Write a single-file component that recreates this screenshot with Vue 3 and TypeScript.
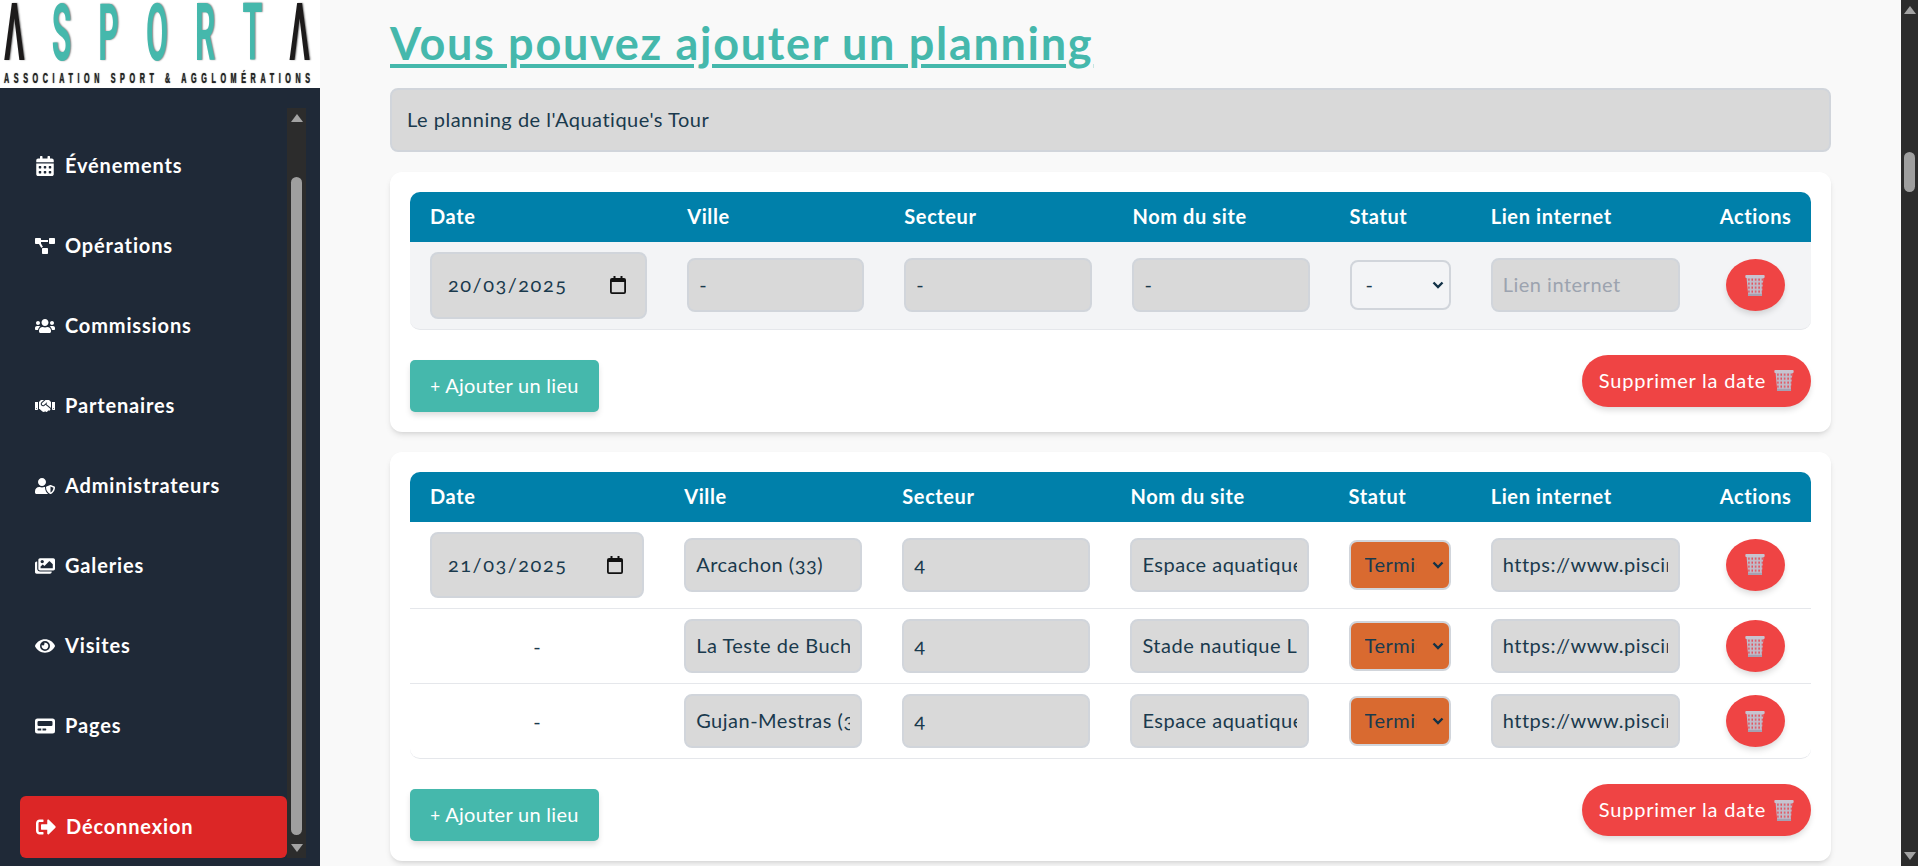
<template>
  <div class="page">
    <aside class="sidebar">
      <div class="logo">
        <div class="logo-word">
          <span v-for="(l, i) in logoLetters" :key="i" class="logo-letter" :class="{ dark: l === 'Λ' }">{{ l }}</span>
        </div>
        <div class="logo-sub">ASSOCIATION SPORT &amp; AGGLOMÉRATIONS</div>
      </div>
      <div class="side-body">
        <nav class="side-nav">
          <a v-for="item in navItems" :key="item.label" class="nav-item">
            <svg class="nav-icon" :viewBox="item.box" preserveAspectRatio="xMidYMid meet"><path fill="currentColor" :d="item.d" /></svg>
            <span>{{ item.label }}</span>
          </a>
          <a class="logout">
            <svg class="nav-icon" viewBox="0 0 512 512"><path fill="currentColor" :d="logoutIcon" /></svg>
            <span>Déconnexion</span>
          </a>
        </nav>
        <div class="side-scroll">
          <span class="arrow up"></span>
          <span class="side-thumb"></span>
          <span class="arrow down"></span>
        </div>
      </div>
    </aside>

    <main class="content">
      <h1 class="title">Vous pouvez ajouter un planning</h1>
      <input class="field title-input" type="text" value="Le planning de l'Aquatique's Tour" />

      <section v-for="(day, d) in days" :key="d" class="card">
        <table class="plan-table">
          <colgroup>
            <col v-for="(w, c) in day.cols" :key="c" :style="{ width: w + 'px' }" />
          </colgroup>
          <thead>
            <tr>
              <th v-for="h in headers" :key="h">{{ h }}</th>
            </tr>
          </thead>
          <tbody>
            <tr v-for="(row, r) in day.rows" :key="r" :class="{ grey: day.grey }">
              <td class="date-cell">
                <div v-if="r === 0" class="field date-field">
                  <span class="date-text">{{ day.date }}</span>
                  <svg class="cal" viewBox="0 0 16 18">
                    <path fill="#111" d="M3.500 0h2v2h5V0h2v2H14a2 2 0 0 1 2 2v12a2 2 0 0 1-2 2H2a2 2 0 0 1-2-2V4a2 2 0 0 1 2-2h1.500zM1.800 6v10c0 .2.100.3.300.3h11.800c.2 0 .3-.1.300-.3V6z" />
                  </svg>
                </div>
                <span v-else>-</span>
              </td>
              <td><input class="field" type="text" :value="row.ville" /></td>
              <td><input class="field" type="text" :value="row.secteur" /></td>
              <td><input class="field" type="text" :value="row.site" /></td>
              <td>
                <select class="status" :class="{ done: row.statut !== '-' }">
                  <option>{{ row.statut }}</option>
                </select>
              </td>
              <td><input class="field" type="text" :value="row.lien" placeholder="Lien internet" /></td>
              <td class="action-cell">
                <button class="round-btn" type="button">
                  <svg class="trash" viewBox="1.500 1 17 18.500"><use href="#trash-icon" /></svg>
                </button>
              </td>
            </tr>
          </tbody>
        </table>
        <div class="card-foot">
          <button class="add-btn" type="button"><small>+</small> Ajouter un lieu</button>
          <button class="del-btn" type="button">
            <span>Supprimer la date</span>
            <svg class="trash" viewBox="1.500 1 17 18.500"><use href="#trash-icon" /></svg>
          </button>
        </div>
      </section>
    </main>

    <div class="page-scroll">
      <span class="arrow up"></span>
      <span class="page-thumb"></span>
      <span class="arrow down"></span>
    </div>

    <svg width="0" height="0" class="defs">
      <defs>
        <pattern id="mesh" width="3" height="3.500" patternUnits="userSpaceOnUse">
          <rect width="3" height="3.500" fill="#c0bcca" />
          <rect x="1" y=".6" width="1.200" height="1.900" fill="#e8444f" />
        </pattern>
        <g id="trash-icon">
          <path d="M2.500 3h15l-1.500 15.500a1.200 1.200 0 0 1-1.200 1H5.200a1.200 1.200 0 0 1-1.200-1z" fill="url(#mesh)" />
          <rect x="1.500" y="1" width="17" height="2.600" rx=".8" fill="#c8c4d0" />
          <rect x="3.800" y="17.600" width="12.400" height="1.900" fill="#a5a1b2" />
        </g>
      </defs>
    </svg>
  </div>
</template>

<script setup lang="ts">
interface PlanRow {
  ville: string;
  secteur: string;
  site: string;
  statut: string;
  lien: string;
}

interface PlanDay {
  date: string;
  grey: boolean;
  cols: number[];
  rows: PlanRow[];
}

const logoLetters = ["Λ", "S", "P", "O", "R", "T", "Λ"];

const navItems = [
  {
    label: "Événements",
    box: "0 0 448 512",
    d: "M0 464c0 26.500 21.500 48 48 48h352c26.500 0 48-21.500 48-48V192H0v272zm320-196c0-6.600 5.400-12 12-12h40c6.600 0 12 5.400 12 12v40c0 6.600-5.400 12-12 12h-40c-6.600 0-12-5.400-12-12v-40zm0 128c0-6.600 5.400-12 12-12h40c6.600 0 12 5.400 12 12v40c0 6.600-5.400 12-12 12h-40c-6.600 0-12-5.400-12-12v-40zM192 268c0-6.600 5.400-12 12-12h40c6.600 0 12 5.400 12 12v40c0 6.600-5.400 12-12 12h-40c-6.600 0-12-5.400-12-12v-40zm0 128c0-6.600 5.400-12 12-12h40c6.600 0 12 5.400 12 12v40c0 6.600-5.400 12-12 12h-40c-6.600 0-12-5.400-12-12v-40zM64 268c0-6.600 5.400-12 12-12h40c6.600 0 12 5.400 12 12v40c0 6.600-5.400 12-12 12H76c-6.600 0-12-5.400-12-12v-40zm0 128c0-6.600 5.400-12 12-12h40c6.600 0 12 5.400 12 12v40c0 6.600-5.400 12-12 12H76c-6.600 0-12-5.400-12-12v-40zM400 64h-48V16c0-8.800-7.200-16-16-16h-32c-8.800 0-16 7.200-16 16v48H160V16c0-8.800-7.200-16-16-16h-32c-8.800 0-16 7.200-16 16v48H48C21.500 64 0 85.500 0 112v48h448v-48c0-26.500-21.500-48-48-48z",
  },
  {
    label: "Opérations",
    box: "0 0 640 512",
    d: "M384 320H256c-17.670 0-32 14.330-32 32v128c0 17.670 14.330 32 32 32h128c17.670 0 32-14.330 32-32V352c0-17.670-14.330-32-32-32zM192 32c0-17.670-14.330-32-32-32H32C14.330 0 0 14.330 0 32v128c0 17.670 14.330 32 32 32h95.720l73.160 128.040C211.980 300.980 232.400 288 256 288h.28L192 175.510V128h224V64H192V32zM608 0H480c-17.670 0-32 14.330-32 32v128c0 17.670 14.330 32 32 32h128c17.670 0 32-14.330 32-32V32c0-17.670-14.330-32-32-32z",
  },
  {
    label: "Commissions",
    box: "0 0 640 512",
    d: "M96 224c35.300 0 64-28.700 64-64s-28.700-64-64-64-64 28.700-64 64 28.700 64 64 64zm448 0c35.300 0 64-28.700 64-64s-28.700-64-64-64-64 28.700-64 64 28.700 64 64 64zm32 32h-64c-17.600 0-33.500 7.100-45.100 18.600 40.300 22.100 68.900 62 75.100 109.400h66c17.700 0 32-14.300 32-32v-32c0-35.300-28.700-64-64-64zm-256 0c61.900 0 112-50.100 112-112S381.900 32 320 32 208 82.100 208 144s50.100 112 112 112zm76.800 32h-8.300c-20.800 10-43.900 16-68.500 16s-47.600-6-68.500-16h-8.300C179.600 288 128 339.600 128 403.200V432c0 26.500 21.500 48 48 48h288c26.500 0 48-21.500 48-48v-28.800c0-63.600-51.600-115.200-115.200-115.200zm-223.700-13.400C161.500 263.100 145.600 256 128 256H64c-35.300 0-64 28.700-64 64v32c0 17.700 14.300 32 32 32h65.900c6.300-47.400 34.900-87.300 75.200-109.400z",
  },
  {
    label: "Partenaires",
    box: "0 0 640 512",
    d: "M434.700 64h-85.900c-8 0-15.700 3-21.600 8.400l-98.300 90c-.1.100-.2.300-.3.400-16.600 15.600-16.300 40.500-2.100 56 12.700 13.900 39.400 17.600 56.100 2.700.1-.1.300-.1.400-.2l79.900-73.200c6.500-5.900 16.700-5.500 22.600 1 6 6.500 5.500 16.600-1 22.600l-26.100 23.900L504 313.800c2.900 2.400 5.500 5 7.900 7.700V128l-54.600-54.600c-5.900-6-14.100-9.400-22.600-9.400zM544 128.200v223.900c0 17.700 14.300 32 32 32h64V128.200h-96zm48 223.900c-8.800 0-16-7.200-16-16s7.200-16 16-16 16 7.200 16 16-7.200 16-16 16zM0 384h64c17.700 0 32-14.300 32-32V128.200H0V384zm48-63.900c8.800 0 16 7.200 16 16s-7.200 16-16 16-16-7.200-16-16c0-8.900 7.200-16 16-16zm435.900 18.600L334.600 217.500l-30 27.500c-29.700 27.100-75.200 24.500-101.700-4.400-26.900-29.400-24.800-74.900 4.400-101.700L289.100 64h-83.800c-8.500 0-16.600 3.400-22.600 9.400L128 128v223.900h18.300l90.500 81.900c27.400 22.300 67.700 18.100 90-9.300l.2-.2 17.900 15.500c15.900 13 39.400 10.500 52.300-5.400l31.400-38.600 5.400 4.400c13.700 11.100 33.900 9.100 45-4.700l9.500-11.700c11.200-13.800 9.100-33.900-4.600-45.100z",
  },
  {
    label: "Administrateurs",
    box: "0 0 640 512",
    d: "M622.300 271.100l-115.200-45c-4.100-1.600-12.600-3.700-22.200 0l-115.200 45c-10.700 4.200-17.700 14-17.700 24.900 0 111.600 68.700 188.800 132.900 213.900 9.600 3.700 18 1.600 22.200 0C558.400 489.900 640 420.500 640 296c0-10.900-7-20.700-17.700-24.900zM496 462.400V273.300l95.500 37.300c-5.600 87.100-60.900 135.400-95.500 151.800zM224 256c70.700 0 128-57.300 128-128S294.700 0 224 0 96 57.300 96 128s57.300 128 128 128zm96 40c0-2.500.8-4.800 1.100-7.200-2.500-.1-4.900-.8-7.500-.8h-16.700c-22.200 10.200-46.900 16-72.900 16s-50.600-5.800-72.900-16h-16.700C60.200 288 0 348.200 0 422.400V464c0 26.500 21.500 48 48 48h352c6.800 0 13.300-1.500 19.200-4-54-42.900-99.200-116.700-99.200-212z",
  },
  {
    label: "Galeries",
    box: "0 0 576 512",
    d: "M480 416v16c0 26.510-21.490 48-48 48H48c-26.510 0-48-21.490-48-48V176c0-26.510 21.490-48 48-48h16v208c0 44.112 35.888 80 80 80h336zm96-80V80c0-26.510-21.490-48-48-48H144c-26.510 0-48 21.490-48 48v256c0 26.510 21.490 48 48 48h384c26.510 0 48-21.490 48-48zM256 128c0 26.510-21.490 48-48 48s-48-21.490-48-48 21.490-48 48-48 48 21.490 48 48zm-96 144l55.515-55.515c4.686-4.686 12.284-4.686 16.971 0L272 256l135.515-135.515c4.686-4.686 12.284-4.686 16.971 0L512 208v112H160v-48z",
  },
  {
    label: "Visites",
    box: "0 0 576 512",
    d: "M572.520 241.400C518.290 135.590 410.930 64 288 64S57.680 135.640 3.480 241.410a32.350 32.350 0 0 0 0 29.190C57.710 376.410 165.070 448 288 448s230.320-71.640 284.520-177.410a32.350 32.350 0 0 0 0-29.190zM288 400a144 144 0 1 1 144-144 143.930 143.930 0 0 1-144 144zm0-240a95.310 95.310 0 0 0-25.310 3.790 47.850 47.850 0 0 1-66.900 66.900A95.780 95.780 0 1 0 288 160z",
  },
  {
    label: "Pages",
    box: "0 0 512 512",
    d: "M448 64H64a64 64 0 0 0-64 64v256a64 64 0 0 0 64 64h384a64 64 0 0 0 64-64V128a64 64 0 0 0-64-64zM160 368H80a16 16 0 0 1-16-16v-16a16 16 0 0 1 16-16h80zm128-16a16 16 0 0 1-16 16h-80v-48h80a16 16 0 0 1 16 16zm160-128a32 32 0 0 1-32 32H96a32 32 0 0 1-32-32v-64a32 32 0 0 1 32-32h320a32 32 0 0 1 32 32z",
  },
];

const logoutIcon =
  "M497 273L329 441c-15 15-41 4.500-41-17v-96H152c-13.300 0-24-10.700-24-24v-96c0-13.300 10.700-24 24-24h136V88c0-21.400 25.900-32 41-17l168 168c9.300 9.400 9.300 24.600 0 34zM192 436v-40c0-6.600-5.400-12-12-12H96c-17.700 0-32-14.300-32-32V160c0-17.700 14.300-32 32-32h84c6.600 0 12-5.400 12-12V76c0-6.600-5.400-12-12-12H96c-53 0-96 43-96 96v192c0 53 43 96 96 96h84c6.600 0 12-5.400 12-12z";

const headers = ["Date", "Ville", "Secteur", "Nom du site", "Statut", "Lien internet", "Actions"];

const lien = "https://www.piscine-arcachon.fr";

const days: PlanDay[] = [
  {
    date: "20/03/2025",
    grey: true,
    cols: [257, 217, 228, 217, 141, 229, 111],
    rows: [{ ville: "-", secteur: "-", site: "-", statut: "-", lien: "" }],
  },
  {
    date: "21/03/2025",
    grey: false,
    cols: [254, 218, 228, 218, 142, 229, 111],
    rows: [
      { ville: "Arcachon (33)", secteur: "4", site: "Espace aquatique", statut: "Terminé", lien },
      { ville: "La Teste de Buch (33)", secteur: "4", site: "Stade nautique La Teste", statut: "Terminé", lien },
      { ville: "Gujan-Mestras (33)", secteur: "4", site: "Espace aquatique", statut: "Terminé", lien },
    ],
  },
];
</script>

<style>
html,
body {
  margin: 0;
  overflow: hidden;
}
</style>

<style scoped>
.page {
  display: flex;
  width: 1918px;
  height: 866px;
  overflow: hidden;
  background: #f9f9f9;
  font-family: Lato, "Open Sans", sans-serif;
  font-feature-settings: "onum";
  color: #1a3a4d;
}

.sidebar {
  display: flex;
  flex-direction: column;
  flex: 0 0 320px;
  width: 320px;
  min-width: 0;
  overflow: hidden;
  background: #1f2937;
  color: #fff;
}

.logo {
  display: flex;
  flex-direction: column;
  height: 88px;
  padding: 3px 10px 0 4px;
  box-sizing: border-box;
  background: #fff;
  overflow: hidden;
}

.logo-word {
  display: flex;
  justify-content: space-between;
  height: 59px;
  align-items: center;
}

.logo-letter {
  font-family: Roboto, sans-serif;
  font-size: 32px;
  line-height: 0.75;
  font-weight: 700;
  color: #45b8ac;
  text-shadow: 1px 0 1px #888;
  transform: scaleY(2.47);
}

.logo-letter.dark {
  color: #1c1a1a;
}

.logo-sub {
  width: 306px;
  margin-top: 10px;
  font-family: "Liberation Sans", sans-serif;
  font-size: 9px;
  line-height: 12px;
  font-weight: 700;
  letter-spacing: 5.750px;
  white-space: nowrap;
  color: #222;
  text-shadow: 0 0 1px #555;
  transform: scaleX(0.8) scaleY(1.55);
  transform-origin: left center;
}

.side-body {
  display: flex;
  flex: 1;
  padding: 20px 14px 8px 20px;
  min-height: 0;
}

.side-nav {
  display: flex;
  flex-direction: column;
  flex: 1;
  min-width: 0;
  padding-top: 18px;
}

.nav-item,
.logout {
  display: flex;
  align-items: center;
  gap: 10px;
  font-size: 20px;
  font-weight: 700;
  letter-spacing: 0.85px;
}

.nav-item span,
.logout span {
  padding-bottom: 2px;
}

.nav-item {
  height: 80px;
  padding-left: 15px;
}

.logout {
  margin-top: auto;
  height: 62px;
  padding-left: 16px;
  background: #dc2626;
  border-radius: 6px;
}

.nav-icon {
  width: 20px;
  height: 20px;
  flex: none;
}

.side-scroll,
.page-scroll {
  display: flex;
  flex-direction: column;
  align-items: center;
  background: #2c2c2c;
}

.side-scroll {
  flex: 0 0 19px;
}

.page-scroll {
  flex: 0 0 17px;
}

.arrow {
  width: 0;
  height: 0;
  border-left: 6px solid transparent;
  border-right: 6px solid transparent;
}

.arrow.up {
  margin-top: 6px;
  border-bottom: 8px solid #a3a3a3;
}

.arrow.down {
  margin-top: auto;
  margin-bottom: 6px;
  border-top: 8px solid #a3a3a3;
}

.side-thumb {
  width: 11px;
  height: 658px;
  margin-top: 55px;
  border-radius: 6px;
  background: #9f9f9f;
}

.page-thumb {
  width: 11px;
  height: 40px;
  margin-top: 138px;
  border-radius: 6px;
  background: #9f9f9f;
}

.content {
  flex: 1;
  min-width: 0;
  padding: 0 70px;
}

.title {
  margin: 0;
  height: 88px;
  padding-top: 17px;
  box-sizing: border-box;
  font-size: 45px;
  line-height: 52px;
  font-weight: 700;
  letter-spacing: 1.700px;
  color: #45b8ac;
  text-decoration: underline;
  text-decoration-thickness: 4px;
  text-underline-offset: 4px;
}

.field {
  width: 100%;
  height: 54px;
  padding: 0 10px 2px;
  box-sizing: border-box;
  border: 2px solid #d1d5db;
  border-radius: 8px;
  background: #d9d9d9;
  font-family: inherit;
  font-feature-settings: "onum";
  font-size: 20px;
  letter-spacing: 0.5px;
  color: #1a3a4d;
  outline: none;
}

.field::placeholder {
  color: #9ca3af;
}

.title-input {
  display: block;
  height: 64px;
  padding: 0 15px 2px;
}

.card {
  margin-top: 20px;
  padding: 20px;
  border-radius: 12px;
  background: #fff;
  box-shadow: 0 4px 6px -1px rgba(0, 0, 0, 0.1), 0 2px 4px -2px rgba(0, 0, 0, 0.1);
}

.plan-table {
  width: 100%;
  table-layout: fixed;
  border-collapse: separate;
  border-spacing: 0;
}

.plan-table th {
  height: 50px;
  padding: 0 20px 2px;
  box-sizing: border-box;
  background: #0080aa;
  color: #fff;
  font-size: 20px;
  font-weight: 700;
  letter-spacing: 0.6px;
  text-align: left;
  white-space: nowrap;
}

.plan-table th:first-child {
  border-top-left-radius: 10px;
}

.plan-table th:last-child {
  border-top-right-radius: 10px;
}

.plan-table td {
  padding: 10px 20px;
  border-bottom: 1px solid #e5e7eb;
  font-size: 20px;
}

.plan-table tr:last-child td:first-child {
  border-bottom-left-radius: 10px;
}

.plan-table tr:last-child td:last-child {
  border-bottom-right-radius: 10px;
}

.grey td {
  background: #f3f4f6;
}

.date-cell {
  text-align: center;
}

.date-field {
  display: flex;
  align-items: center;
  justify-content: space-between;
  height: 66.500px;
  padding: 0 19px 0 16px;
  text-align: left;
}

.date-text {
  padding-bottom: 2px;
  letter-spacing: 1.500px;
}

.cal {
  width: 16px;
  height: 18px;
}

.status {
  display: block;
  width: 100%;
  height: 50px;
  padding: 0 32px 2px 14px;
  box-sizing: border-box;
  border: 2px solid #d1d5db;
  border-radius: 8px;
  appearance: none;
  background-color: #f3f4f6;
  background-image: url("data:image/svg+xml,%3Csvg xmlns='http://www.w3.org/2000/svg' width='12' height='8' viewBox='0 0 12 8'%3E%3Cpath d='M1.500 1.500 6 6l4.500-4.500' fill='none' stroke='%23123247' stroke-width='2.400'/%3E%3C/svg%3E");
  background-repeat: no-repeat;
  background-position: right 5px center;
  font-family: inherit;
  font-feature-settings: "onum";
  font-size: 20px;
  letter-spacing: 0.5px;
  color: #1a3a4d;
}

.status.done {
  background-color: #d96a30;
}

.action-cell {
  text-align: center;
}

.round-btn {
  display: inline-flex;
  align-items: center;
  justify-content: center;
  vertical-align: middle;
  width: 59px;
  height: 52px;
  padding: 0;
  border: none;
  border-radius: 50%;
  background: #ef4444;
  box-shadow: 0 4px 6px -1px rgba(0, 0, 0, 0.15);
}

.trash {
  width: 20px;
  height: 21px;
  flex: none;
}

.card-foot {
  display: flex;
  justify-content: space-between;
  align-items: flex-start;
  margin-top: 25px;
}

.add-btn {
  width: 189px;
  height: 52px;
  margin-top: 5px;
  padding: 0 0 2px;
  border: none;
  border-radius: 5px;
  background: #45b8ac;
  color: #fff;
  font-family: inherit;
  font-size: 20px;
  letter-spacing: 0.3px;
  box-shadow: 0 4px 6px -1px rgba(0, 0, 0, 0.15);
}

.add-btn small {
  font-size: 17px;
}

.del-btn {
  display: flex;
  align-items: center;
  justify-content: center;
  gap: 8px;
  width: 229px;
  height: 52px;
  padding: 0;
  border: none;
  border-radius: 26px;
  background: #ef4444;
  color: #fff;
  font-family: inherit;
  font-size: 20px;
  letter-spacing: 0.8px;
  box-shadow: 0 4px 6px -1px rgba(0, 0, 0, 0.15);
}

.del-btn span {
  padding-bottom: 2px;
}

.defs {
  position: absolute;
}
</style>
